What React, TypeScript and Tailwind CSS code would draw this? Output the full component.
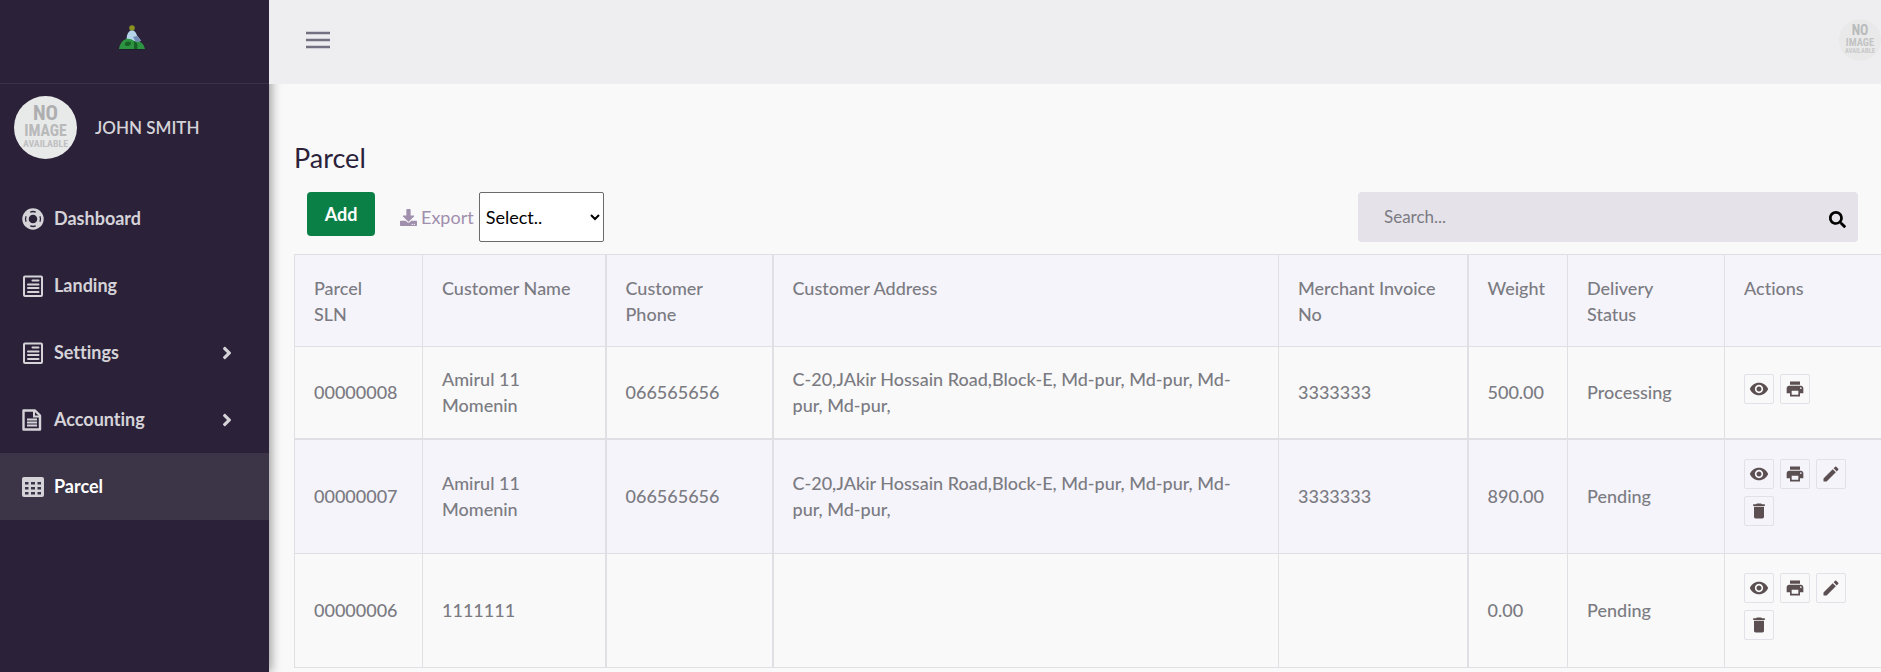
import { FaAngleRight, FaDownload, FaSearch } from "react-icons/fa";
import { MdDelete, MdEdit, MdPrint, MdVisibility } from "react-icons/md";

const RingIcon = () => (
  <svg viewBox="0 0 24 24" className="size-[22px]" aria-hidden="true">
    <circle cx="12" cy="12" r="8.200" fill="none" stroke="currentColor" strokeWidth="7" />
    <g fill="none" stroke="#2b223a" strokeWidth="1.400">
      <path d="M9 4.400a8.200 8.200 0 0 1 6 0M9 19.600a8.200 8.200 0 0 0 6 0M4.400 9a8.200 8.200 0 0 0 0 6M19.600 9a8.200 8.200 0 0 1 0 6" />
    </g>
  </svg>
);

const ListIcon = () => (
  <svg viewBox="0 0 22 22" className="size-[22px]" fill="none" stroke="currentColor" strokeWidth="2" aria-hidden="true">
    <rect x="2" y="1.500" width="18" height="19.500" rx="1" />
    <path d="M10.500 5.500h6M6 9.500h10.500M6 13h10.500M6 17h10.500" strokeLinecap="round" />
  </svg>
);

const FileIcon = () => (
  <svg viewBox="0 0 22 22" className="size-[22px]" fill="none" stroke="currentColor" strokeWidth="2.400" aria-hidden="true">
    <path d="M1.500 1.500h11.500l5 5v14H1.500z" strokeLinejoin="round" />
    <path d="M12 2v5.500h6M5 10.500h10M5 13.500h10M5 16.500h10" strokeWidth="2" />
  </svg>
);

const GridIcon = () => (
  <svg viewBox="0 0 22 22" className="size-[22px]" aria-hidden="true">
    <rect y="1" width="22" height="20" rx="2" fill="currentColor" />
    <path
      d="M3 6h3.500v2.500H3zM9 6h4v2.500H9zM15.500 6H19v2.500h-3.500zM3 11h3.500v2.500H3zM9 11h4v2.500H9zM15.500 11H19v2.500h-3.500zM3 16h3.500v2.500H3zM9 16h4v2.500H9zM15.500 16H19v2.500h-3.500z"
      fill="#3c3548"
    />
  </svg>
);

const BurgerIcon = () => (
  <svg viewBox="0 0 24 18" className="h-[18px] w-6" aria-hidden="true">
    <path d="M0 2h24M0 9h24M0 16h24" fill="none" stroke="#737081" strokeWidth="2.500" />
  </svg>
);

const Logo = () => (
  <svg viewBox="0 0 28 26" className="h-[26px] w-7" aria-hidden="true">
    <circle cx="14" cy="3" r="2.800" fill="#8a9220" />
    <path d="M14 5.500c3 0 4 2 5 5l4 5-3 2H8l1-7c1-3 2-5 5-5z" fill="#b4d4ea" />
    <path d="M15 12l4-1 4 5-5 1z" fill="#7189b5" />
    <path d="M1 24c1-7 6-11 10-10 3 0 5 2 7 3 3-2 8 1 9 7z" fill="#2c9440" />
    <path d="M7 18c3-3 7-1 6 1s-5 3-6 1M16 16c4 1 4 5 3 8h-3z" fill="#176127" />
    <path d="M3 24h22v1H3z" fill="#1a1f2a" />
  </svg>
);

const NoImage = ({ className }: { className: string }) => (
  <svg viewBox="0 0 64 64" className={className} role="img" aria-label="No image available">
    <circle cx="32" cy="32" r="32" fill="#e8e9e9" />
    <g fill="#adaeaf" fontFamily="'Roboto Condensed', sans-serif" fontWeight="700" textAnchor="middle">
      <text x="32" y="24" fontSize="21">NO</text>
      <text x="32" y="41" fontSize="16" fill="#b8b9ba">IMAGE</text>
      <text x="32" y="52" fontSize="10" fill="#bfc0c1">AVAILABLE</text>
    </g>
  </svg>
);

const menu = [
  { label: "Dashboard", icon: RingIcon },
  { label: "Landing", icon: ListIcon },
  { label: "Settings", icon: ListIcon, sub: true },
  { label: "Accounting", icon: FileIcon, sub: true },
  { label: "Parcel", icon: GridIcon, active: true },
];

const columns = [
  { label: "Parcel\nSLN", width: "w-32" },
  { label: "Customer Name", width: "w-[183px]" },
  { label: "Customer\nPhone", width: "w-[167px] border-l-2" },
  { label: "Customer Address", width: "w-[506px] border-l-2" },
  { label: "Merchant Invoice\nNo", width: "w-[189px]" },
  { label: "Weight", width: "w-[100px] border-l-2" },
  { label: "Delivery\nStatus", width: "w-[157px]" },
  { label: "Actions", width: "w-[170px]" },
];

const address = "C-20,JAkir Hossain Road,Block-E, Md-pur, Md-pur, Md-pur, Md-pur,";

const rows = [
  { cells: ["00000008", "Amirul 11 Momenin", "066565656", address, "3333333", "500.00", "Processing"], editable: false },
  { cells: ["00000007", "Amirul 11 Momenin", "066565656", address, "3333333", "890.00", "Pending"], editable: true },
  { cells: ["00000006", "1111111", "", "", "", "0.00", "Pending"], editable: true },
];

const actions = [
  { label: "View", icon: MdVisibility },
  { label: "Print", icon: MdPrint },
  { label: "Edit", icon: MdEdit },
  { label: "Delete", icon: MdDelete },
];

function Sidebar() {
  return (
    <aside className="z-10 w-[269px] shrink-0 bg-[#2b223a] text-[#d5d3d8] shadow-[2px_0_10px_rgba(0,0,0,0.4)]">
      <div className="flex h-[84px] items-center justify-center border-b border-[#3a3148] pr-1.5 pb-2">
        <a href="#" aria-label="Home">
          <Logo />
        </a>
      </div>
      <div className="flex items-center gap-[18px] px-3.5 pt-3 pb-[26px]">
        <NoImage className="size-[63px]" />
        <span className="text-[17px] font-semibold">JOHN SMITH</span>
      </div>
      <nav>
        {menu.map(({ label, icon: Icon, sub, active }) => (
          <a
            key={label}
            href="#"
            className={`flex h-[67px] items-center gap-2.5 pr-8 pl-[22px] text-[18px] font-bold ${
              active ? "bg-[#3c3548]" : ""
            }`}
          >
            <Icon />
            <span className={active ? "text-white" : ""}>{label}</span>
            {sub && <FaAngleRight className="ml-auto size-5" />}
          </a>
        ))}
      </nav>
    </aside>
  );
}

export default function App() {
  return (
    <div className="flex min-h-screen overflow-hidden bg-[#f9f9f9] font-[Lato,sans-serif] text-[#7b7b82] [font-variant-ligatures:none]">
      <Sidebar />
      <div className="min-w-0 flex-1">
        <header className="relative z-20 flex h-[84px] items-center justify-between bg-[#eeeef0] pb-1 pl-[37px]">
          <button type="button" aria-label="Toggle menu">
            <BurgerIcon />
          </button>
          <NoImage className="size-[42px] opacity-80" />
        </header>
        <main className="pt-[58px] pl-[25px]">
          <h1 className="text-[27px] leading-8 text-[#2b223a]">Parcel</h1>
          <div className="mt-[18px] flex items-start pr-[23px] pl-[13px]">
            <button type="button" className="h-11 w-[68px] rounded bg-[#0a8047] text-[18px] font-bold text-white">
              Add
            </button>
            <div className="ml-[25px] flex h-[50px] items-center text-[18px]">
              <label htmlFor="export" className="flex items-center gap-1 text-[#a08fad]">
                <FaDownload className="size-[17px]" />
                Export
              </label>
              <select
                id="export"
                className="ml-[5px] h-[50px] w-[125px] rounded-xs border border-[#6b6b6b] bg-white px-0.5 text-black"
              >
                <option>Select..</option>
              </select>
            </div>
            <form className="ml-auto flex h-[50px] w-[500px] items-center rounded bg-[#e5e2e9] pr-3 pl-[26px]">
              <input
                type="text"
                aria-label="Search"
                placeholder="Search..."
                className="min-w-0 flex-1 bg-transparent text-[17px] outline-none placeholder:text-[#7b7b82]"
              />
              <button type="button" aria-label="Submit search" className="pt-1">
                <FaSearch className="size-[17px] text-black" />
              </button>
            </form>
          </div>
          <div className="mt-3 overflow-hidden">
            <table className="w-[1600px] table-fixed border-collapse text-[18px] leading-[26px] font-medium">
              <thead>
                <tr className="bg-[#f5f4fa]">
                  {columns.map((column) => (
                    <th
                      key={column.label}
                      className={`border border-[#dfdfe4] px-[19px] pt-5 pb-[19px] text-left align-top font-medium whitespace-pre-line ${column.width}`}
                    >
                      {column.label}
                    </th>
                  ))}
                </tr>
              </thead>
              <tbody>
                {rows.map((row) => (
                  <tr key={row.cells[0]} className="even:border-t-2 even:border-[#dfdfe4] even:bg-[#f5f4fa]">
                    {row.cells.map((cell, i) => (
                      <td
                        key={i}
                        className={`border border-[#dfdfe4] px-[19px] pt-[19px] pb-5 ${
                          [2, 3, 5].includes(i) ? "border-l-2" : ""
                        }`}
                      >
                        {cell}
                      </td>
                    ))}
                    <td className="border border-[#dfdfe4] px-[19px] pt-[19px] pb-5">
                      <div className="flex flex-wrap gap-x-1.5 gap-y-[7px] pb-[7px]">
                        {(row.editable ? actions : actions.slice(0, 2)).map(({ label, icon: Icon }) => (
                          <button
                            key={label}
                            type="button"
                            aria-label={label}
                            className="flex size-[30px] items-center justify-center rounded-xs border border-[#e2e1e7] text-[#5b4f52]"
                          >
                            <Icon className="size-5" />
                          </button>
                        ))}
                      </div>
                    </td>
                  </tr>
                ))}
              </tbody>
            </table>
          </div>
        </main>
      </div>
    </div>
  );
}
